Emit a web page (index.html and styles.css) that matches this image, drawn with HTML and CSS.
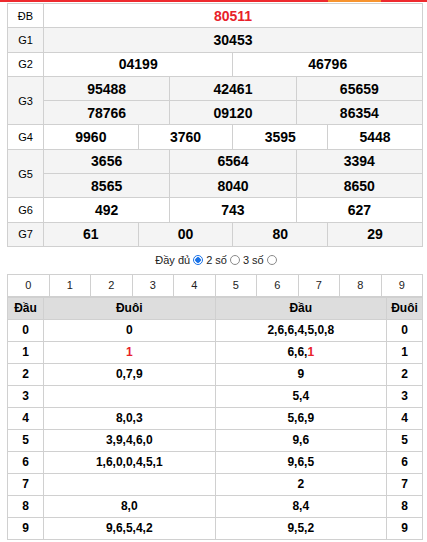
FILE: index.html
```html
<!DOCTYPE html>
<html lang="vi">
<head>
<meta charset="utf-8">
<link rel="stylesheet" href="styles.css">
</head>
<body>
<div class="topbar"><span class="seg"></span></div>
<div class="wrap">
<table class="kq">
  <colgroup>
    <col class="lab">
    <col><col><col><col><col><col><col><col><col><col><col><col>
  </colgroup>
  <tr class="w"><td class="l">ĐB</td><td colspan="12" class="red">80511</td></tr>
  <tr class="g"><td class="l">G1</td><td colspan="12">30453</td></tr>
  <tr class="w"><td class="l">G2</td><td colspan="6">04199</td><td colspan="6">46796</td></tr>
  <tr class="g"><td class="l" rowspan="2">G3</td><td colspan="4">95488</td><td colspan="4">42461</td><td colspan="4">65659</td></tr>
  <tr class="g"><td colspan="4">78766</td><td colspan="4">09120</td><td colspan="4">86354</td></tr>
  <tr class="w"><td class="l">G4</td><td colspan="3">9960</td><td colspan="3">3760</td><td colspan="3">3595</td><td colspan="3">5448</td></tr>
  <tr class="g"><td class="l" rowspan="2">G5</td><td colspan="4">3656</td><td colspan="4">6564</td><td colspan="4">3394</td></tr>
  <tr class="g"><td colspan="4">8565</td><td colspan="4">8040</td><td colspan="4">8650</td></tr>
  <tr class="w"><td class="l">G6</td><td colspan="4">492</td><td colspan="4">743</td><td colspan="4">627</td></tr>
  <tr class="g"><td class="l">G7</td><td colspan="3">61</td><td colspan="3">00</td><td colspan="3">80</td><td colspan="3">29</td></tr>
</table>

<div class="opts">
  <span>Đầy đủ</span><span class="radio on"></span><span>2 số</span><span class="radio"></span><span>3 số</span><span class="radio"></span>
</div>

<table class="digits">
  <tr><td>0</td><td>1</td><td>2</td><td>3</td><td>4</td><td>5</td><td>6</td><td>7</td><td>8</td><td>9</td></tr>
</table>
<table class="lt">
  <colgroup><col class="c1"><col class="c2"><col class="c2"><col class="c1"></colgroup>
  <tr class="hd"><th>Đầu</th><th>Đuôi</th><th>Đầu</th><th>Đuôi</th></tr>
  <tr><td>0</td><td>0</td><td>2,6,6,4,5,0,8</td><td>0</td></tr>
  <tr><td>1</td><td><span class="red">1</span></td><td>6,6,<span class="red">1</span></td><td>1</td></tr>
  <tr><td>2</td><td>0,7,9</td><td>9</td><td>2</td></tr>
  <tr><td>3</td><td></td><td>5,4</td><td>3</td></tr>
  <tr><td>4</td><td>8,0,3</td><td>5,6,9</td><td>4</td></tr>
  <tr><td>5</td><td>3,9,4,6,0</td><td>9,6</td><td>5</td></tr>
  <tr><td>6</td><td>1,6,0,0,4,5,1</td><td>9,6,5</td><td>6</td></tr>
  <tr><td>7</td><td></td><td>2</td><td>7</td></tr>
  <tr><td>8</td><td>8,0</td><td>8,4</td><td>8</td></tr>
  <tr><td>9</td><td>9,6,5,4,2</td><td>9,5,2</td><td>9</td></tr>
</table>
</div>
</body>
</html>
```
FILE: styles.css
```css
html, body {
  margin: 0;
  padding: 0;
  background: #fff;
  font-family: "Liberation Sans", Arial, sans-serif;
  color: #000;
}
.topbar {
  height: 2px;
  background: #ee2a2e;
  position: relative;
}
.topbar .seg {
  position: absolute;
  left: 328px;
  width: 53px;
  top: 0;
  height: 2px;
  background: #f7942f;
}
.wrap {
  padding: 1px 4px 0 7px;
  width: 416px;
}
table {
  border-collapse: collapse;
  width: 416px;
  table-layout: fixed;
}
td, th {
  border: 1px solid #d0d0d0;
  padding: 0;
  text-align: center;
}
.kq col.lab { width: 36px; }
.kq td {
  height: 23.3px;
  font-size: 14px;
  font-weight: bold;
}
.kq tr.g td { background: #f4f4f4; }
.kq tr.w td { background: #fff; }
.kq td.l {
  font-size: 11px;
  font-weight: normal;
}
.red { color: #e8212a; }
.opts {
  height: 27px;
  display: flex;
  align-items: center;
  justify-content: center;
  font-size: 11px;
  color: #222;
  gap: 2px;
  padding-left: 3px;
}
.radio {
  width: 8px;
  height: 8px;
  border: 1px solid #8a8a8a;
  border-radius: 50%;
  background: #fff;
  box-sizing: content-box;
  margin: 0 1px;
}
.radio.on {
  border-color: #1a73e8;
  background: radial-gradient(circle, #1a73e8 0 2.5px, #fff 3px);
}
.digits td {
  height: 21px;
  font-size: 11px;
  color: #222;
}
.lt col.c1 { width: 36px; }
.lt th {
  background: #dddddd;
  font-size: 12px;
  font-weight: bold;
  height: 21px;
}
.lt td {
  height: 21px;
  font-size: 12px;
  font-weight: bold;
}
```
